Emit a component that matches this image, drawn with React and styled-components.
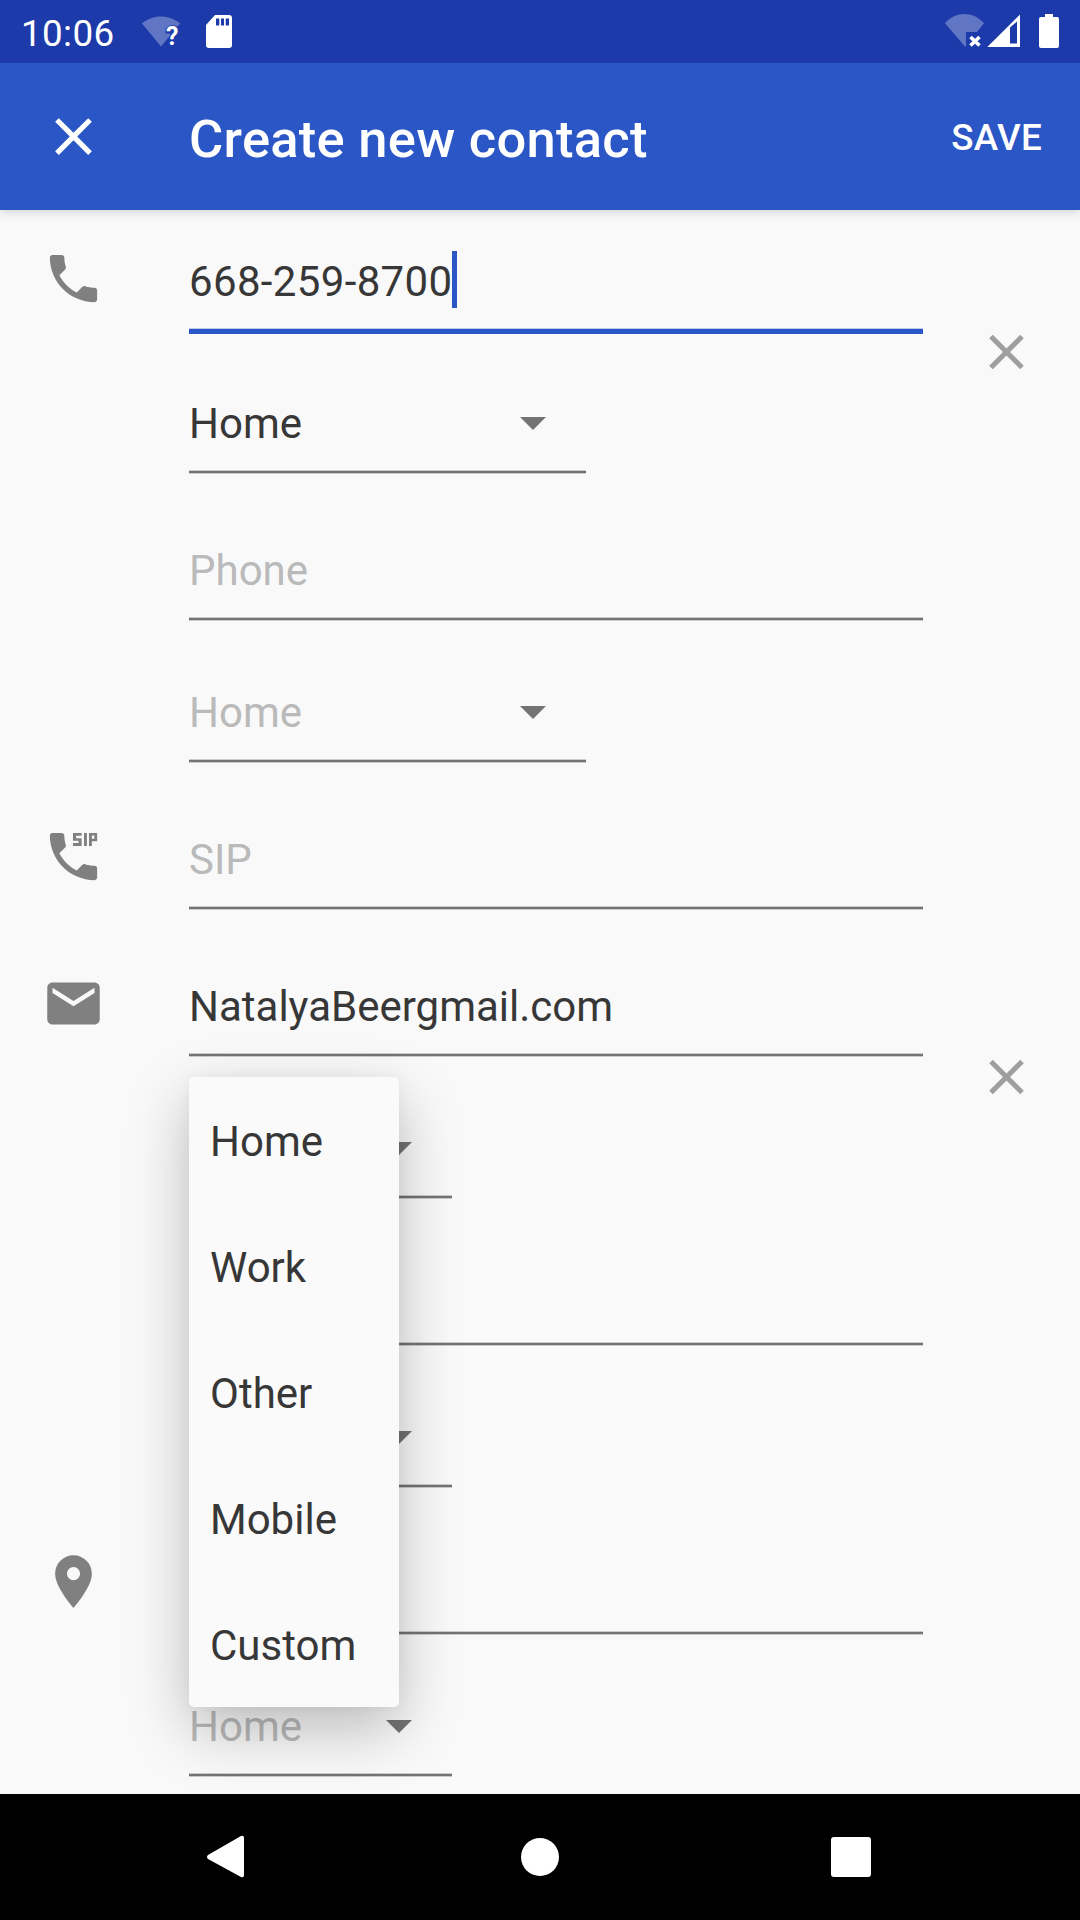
import React from "react";
import styled, { createGlobalStyle, css } from "styled-components";

const Global = createGlobalStyle`
  * { box-sizing: border-box; }
  body { margin: 0; background: #f9f9f9; font-family: Roboto, "Noto Sans", sans-serif; }
`;

const Screen = styled.div`
  display: flex;
  flex-direction: column;
  width: 1080px;
  height: 1920px;
  overflow: hidden;
  background: #f9f9f9;
  color: #373737;
  font-size: 42px;
`;

const StatusBar = styled.header`
  display: flex;
  align-items: center;
  flex: none;
  height: 63px;
  padding: 0 21px;
  background: #1c3aa9;
  color: #fff;
  z-index: 2;
`;

const Clock = styled.span`
  width: 119px;
  padding-top: 4px;
  font-size: 36.75px;
  line-height: 44px;
  letter-spacing: 0.4px;
`;

const StatusIcons = styled.div`
  display: flex;
  margin-left: auto;
`;

const Glyph = styled.svg`
  display: block;
  flex: none;
  fill: currentColor;
`;

const AppBar = styled.div`
  display: flex;
  align-items: center;
  flex: none;
  height: 147px;
  padding: 0 38px 0 42px;
  background: #2a56c6;
  color: #fff;
  font-weight: 500;
  box-shadow: 0 2px 10px rgba(0, 0, 0, 0.16);
  z-index: 1;
`;

const Title = styled.h1`
  flex: 1;
  margin: 4px 0 0 84px;
  font-size: 52.5px;
  font-weight: 500;
  line-height: 62px;
  letter-spacing: 0.27px;
`;

const SaveButton = styled.button`
  padding: 2px 0 0;
  border: 0;
  background: none;
  color: inherit;
  font: 500 36.75px/44px Roboto, sans-serif;
  letter-spacing: 0.3px;
`;

const Form = styled.main`
  display: flex;
  flex-direction: column;
  flex: 1;
  min-height: 0;
  padding-left: 42px;
`;

const Group = styled.section`
  display: flex;
`;

const GroupIcon = styled.div`
  width: 147px;
  padding-top: ${(p) => p.$top}px;
  color: #808080;
`;

const Fields = styled.div`
  display: flex;
  flex-direction: column;
  position: relative;
  width: 734px;
`;

const Field = styled.div`
  display: flex;
  flex-direction: column;
  justify-content: flex-end;
  width: ${(p) => p.$width || 734}px;
  height: ${(p) => p.$height || 147}px;
  color: ${(p) => (p.$hint ? "#bababa" : "#373737")};
`;

const FieldLine = styled.div`
  display: flex;
  align-items: center;
  height: 57px;
  margin-bottom: 20px;
`;

const FieldText = styled.span`
  padding-top: 4px;
  letter-spacing: ${(p) => (p.$numeric ? 0.35 : 0)}px;
`;

const Arrow = styled.i`
  margin: 4px 40px 0 auto;
  border: solid transparent;
  border-width: 13px 13px 0;
  border-top-color: #737373;
`;

const Underline = styled.div`
  height: 4px;
  border: solid #cbcbcb;
  border-width: 1px 0;
  background: #737373;
  ${(p) =>
    p.$active &&
    css`
      height: 6px;
      margin-bottom: -2px;
      border-color: #bccaed transparent transparent;
      border-width: 1px 0 0;
      background: #2a56c6;
    `}
`;

const Caret = styled.i`
  width: 5px;
  height: 57px;
  background: #2a56c6;
`;

const RemoveCell = styled.div`
  margin-left: 52px;
  padding-top: ${(p) => p.$top}px;
  color: #9e9e9e;
`;

const Menu = styled.ul`
  position: absolute;
  top: ${(p) => p.$top}px;
  left: 0;
  z-index: 2;
  width: 210px;
  margin: 0;
  padding: 0;
  list-style: none;
  border-radius: 5px;
  background: #fafafa;
  box-shadow: 0 22px 60px rgba(0, 0, 0, 0.25), 0 0 14px rgba(0, 0, 0, 0.04);
`;

const MenuItem = styled.li`
  display: flex;
  align-items: center;
  height: 126px;
  padding: 3px 21px 0;
`;

const NavBar = styled.nav`
  display: grid;
  grid-template-columns: 311px 311px 311px;
  align-items: center;
  justify-content: center;
  justify-items: center;
  flex: none;
  height: 126px;
  background: #000;
  color: #fff;
  z-index: 1;
`;

const PHONE =
  "M6.62 10.79c1.44 2.83 3.76 5.14 6.59 6.59l2.2-2.2c.27-.27.67-.36 1.02-.24 1.12.37 2.33.57 3.57.57.55 0 1 .45 1 1V20c0 .55-.45 1-1 1-9.39 0-17-7.61-17-17 0-.55.45-1 1-1h3.5c.55 0 1 .45 1 1 0 1.25.2 2.45.57 3.57.11.35.03.74-.25 1.02l-2.2 2.2z";

const ICONS = {
  close: "M19 6.41 17.59 5 12 10.59 6.41 5 5 6.41 10.59 12 5 17.59 6.41 19 12 13.41 17.59 19 19 17.59 13.41 12z",
  phone: PHONE,
  sip: PHONE + "M11.8 3h3.300v1.100h-2.100v.9h2.100V8h-3.300V6.900h2.100V6h-2.100zM16 3h1.100v5H16zM17.900 3H21v3.200h-2V8h-1.100zM19 4v1.200h.95V4z",
  mail: "M20 4H4c-1.1 0-1.99.9-1.99 2L2 18c0 1.1.9 2 2 2h16c1.1 0 2-.9 2-2V6c0-1.1-.9-2-2-2zm0 4-8 5-8-5V6l8 5 8-5v2z",
  place: "M12 2C8.13 2 5 5.13 5 9c0 5.25 7 13 7 13s7-7.75 7-13c0-3.87-3.13-7-7-7zm0 9.500a2.500 2.500 0 1 1 0-5 2.500 2.500 0 0 1 0 5z",
};

const Icon = ({ name }) => (
  <Glyph width="63" height="63" viewBox="0 0 24 24" fillRule="evenodd">
    <path d={ICONS[name]} />
  </Glyph>
);

const RemoveIcon = () => (
  <Glyph width="63" height="63" viewBox="0 0 63 63">
    <path d="M16 16.500 47 47.500M47 16.500 16 47.500" stroke="currentColor" strokeWidth="5" />
  </Glyph>
);

const TextField = ({ value, hint, height, focused }) => (
  <Field $hint={!value} $height={height}>
    <FieldLine>
      <FieldText $numeric={focused}>{value || hint}</FieldText>
      {focused && <Caret />}
    </FieldLine>
    <Underline $active={focused} />
  </Field>
);

const Spinner = ({ label, hint, width }) => (
  <Field $hint={hint} $height={142} $width={width}>
    <FieldLine>
      <FieldText>{label}</FieldText>
      <Arrow />
    </FieldLine>
    <Underline />
  </Field>
);

export default function App() {
  return (
    <Screen>
      <Global />
      <StatusBar>
        <Clock>10:06</Clock>
        <Glyph width="42" height="37" viewBox="140 13 42 37">
          <path opacity=".3" d="M142 23.500C153 14.300 169 14.300 180 23.500L177.500 26.500C173 24 168 25 165.500 29V33.500H169.500L170.500 35 161 46.500z" />
          <text x="166" y="45" fontSize="25" fontWeight="700">?</text>
        </Glyph>
        <Glyph width="63" height="37" viewBox="182 13 63 37">
          <path fillRule="evenodd" d="M215 15h14a3 3 0 0 1 3 3v27a3 3 0 0 1-3 3h-20a3 3 0 0 1-3-3V25zM216 18.500v7h3.300v-7zM221 18.500v7h3v-7zM225.700 18.500v7h3.300v-7z" />
        </Glyph>
        <StatusIcons>
          <Glyph width="114" height="37" viewBox="945 13 114 37">
            <path opacity=".3" d="M945 23.300C956 11 973 11 984 23.300L977 32H966V46.300H964.700z" />
            <path d="M970.500 37 979.500 45.500M979.500 37 970.500 45.500" stroke="#fff" strokeWidth="3.600" />
            <path fillRule="evenodd" d="M987.300 47 1020 14.500V47zM1010 27.500V43.500H1017V21.500z" />
            <path d="M1045 14h8v3h4a2 2 0 0 1 2 2v27a2 2 0 0 1-2 2h-16a2 2 0 0 1-2-2V19a2 2 0 0 1 2-2h4z" />
          </Glyph>
        </StatusIcons>
      </StatusBar>
      <AppBar>
        <Icon name="close" />
        <Title>Create new contact</Title>
        <SaveButton>SAVE</SaveButton>
      </AppBar>
      <Form>
        <Group>
          <GroupIcon $top={37}><Icon name="phone" /></GroupIcon>
          <Fields>
            <TextField value="668-259-8700" height={122} focused />
            <Spinner label="Home" width={397} />
            <TextField hint="Phone" />
            <Spinner label="Home" hint width={397} />
          </Fields>
          <RemoveCell $top={110}><RemoveIcon /></RemoveCell>
        </Group>
        <Group>
          <GroupIcon $top={62}><Icon name="sip" /></GroupIcon>
          <Fields>
            <TextField hint="SIP" />
          </Fields>
        </Group>
        <Group>
          <GroupIcon $top={62}><Icon name="mail" /></GroupIcon>
          <Fields>
            <TextField value="NatalyaBeergmail.com" />
            <Spinner label="" width={263} />
            <TextField hint="" />
            <Spinner label="" width={263} />
            <Menu $top={167}>
              {["Home", "Work", "Other", "Mobile", "Custom"].map((item) => (
                <MenuItem key={item}>{item}</MenuItem>
              ))}
            </Menu>
          </Fields>
          <RemoveCell $top={135}><RemoveIcon /></RemoveCell>
        </Group>
        <Group>
          <GroupIcon $top={62}><Icon name="place" /></GroupIcon>
          <Fields>
            <TextField hint="" />
            <Spinner label="Home" hint width={263} />
          </Fields>
        </Group>
      </Form>
      <NavBar>
        <Glyph width="60" height="50" viewBox="0 0 60 50">
          <path d="M9 23 42 4q3-1 3 2V43q0 3-3 2L9 27q-2-2 0-4z" />
        </Glyph>
        <Glyph width="38" height="38" viewBox="0 0 38 38"><circle cx="19" cy="19" r="19" /></Glyph>
        <Glyph width="40" height="40" viewBox="0 0 40 40"><rect width="40" height="40" rx="3" /></Glyph>
      </NavBar>
    </Screen>
  );
}
